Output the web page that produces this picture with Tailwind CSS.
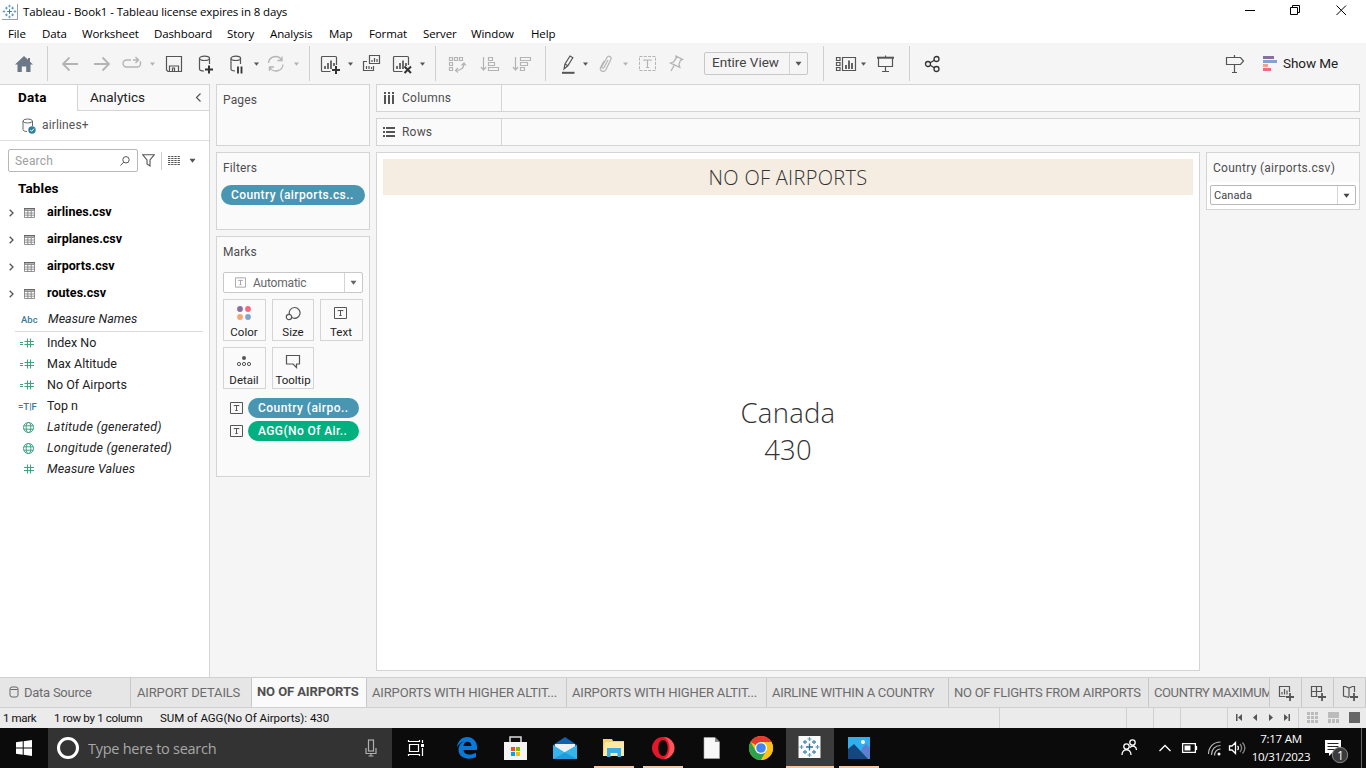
<!DOCTYPE html>
<html lang="en">
<head>
<meta charset="utf-8">
<title>Tableau - Book1</title>
<script src="https://cdn.jsdelivr.net/npm/@tailwindcss/browser@4"></script>
</head>
<body class="w-[1366px] h-[768px] overflow-hidden bg-[#f5f5f5] flex flex-col font-['Roboto',sans-serif] text-[12px] leading-none text-[#4e4e4e] whitespace-nowrap">
<svg class="hidden">
  <symbol id="caret" viewBox="0 0 5 4"><path d="M0 .5h5L2.500 3.800z" fill="currentColor"/></symbol>
  <symbol id="tableau" viewBox="0 0 22 22"><g fill="none" stroke-width="1.300"><path stroke="#2c6f9c" d="M11 7.500v7M7.500 11h7"/><path stroke="#4f8fb5" d="M6.500 4v4M4.500 6h4M15.500 4v4M13.500 6h4M6.500 14v4M4.500 16h4M15.500 14v4M13.500 16h4"/><path stroke="#5a98bd" stroke-width="1.200" d="M11 1v4M9 3h4M11 17v4M9 19h4M1 11h4M3 9v4M17 11h4M19 9v4"/></g></symbol>
  <symbol id="tbl" viewBox="0 0 11 10"><path d="M.5.5h10v9H.5zM.5 2.500h10M.5 5h10M.5 7.200h10M3.800 2.500v7M7.200 2.500v7" fill="none" stroke="#777" stroke-width=".8"/><path d="M0 0h11v1.500H0z" fill="#666"/></symbol>
  <symbol id="hash" viewBox="0 0 10 10"><path d="M3.500.5v9M6.500.5v9M0 3.500h10M0 6.500h10" fill="none" stroke="#3aa57e" stroke-width="1.100"/></symbol>
  <symbol id="eqhash" viewBox="0 0 14 10"><path d="M7.500.5v9M10.500.5v9M4.500 3.500H14M4.500 6.500H14M0 4.500h3M0 6.500h3" fill="none" stroke="#3aa57e" stroke-width="1.100"/></symbol>
  <symbol id="globe" viewBox="0 0 11 11"><g fill="none" stroke="#3aa57e"><circle cx="5.500" cy="5.500" r="5"/><ellipse cx="5.500" cy="5.500" rx="2.300" ry="5"/><path d="M.7 3.800h9.600M.7 7.200h9.600"/></g></symbol>
  <symbol id="tbox" viewBox="0 0 13 12"><path d="M.5.5h12v11H.5z" fill="none" stroke="currentColor"/><path d="M4 4.200V3.500h5v.7M6.500 3.500v5.200M5.300 8.500h2.400" fill="none" stroke="currentColor"/></symbol>
  <symbol id="chev" viewBox="0 0 5 8"><path d="M.7.800L4 4 .7 7.200" fill="none" stroke="#555" stroke-width="1.300"/></symbol>
  <symbol id="chart" viewBox="0 0 22 20"><path d="M10.500 17.500H2.500a1 1 0 0 1-1-1v-13a1 1 0 0 1 1-1h13a1 1 0 0 1 1 1V11" fill="none" stroke="#555" stroke-width="1.200"/><path d="M5 12v3M8 9v6M11 6.500V15M14 9v3" stroke="#555" stroke-width="1.700"/></symbol>
</svg>

<header class="h-[43px] bg-white text-black font-['Open_Sans',sans-serif] text-[11.5px] shrink-0">
  <div class="h-[23px] flex items-center">
    <svg class="ml-[2px] w-4 h-4 border-r border-b border-gray-400" viewBox="0 0 22 22"><use href="#tableau"/></svg>
    <span class="ml-[5px] w-[1217px] tracking-[-0.12px]">Tableau - Book1 - Tableau license expires in 8 days</span>
    <svg class="ml-[5px] w-[110px] h-3 -mt-[3px]" viewBox="0 0 110 12" fill="none" stroke="#000"><path d="M0 6.500h10M45.500 3.500h7v7h-7zM47.500 3.500v-2h7v7h-2M91.500 1.500l9.500 9.500M101 1.500L91.500 11"/></svg>
  </div>
  <nav class="h-5 flex items-center pl-2 pt-[2px] tracking-[-0.12px]">
    <span class="w-[34px]">File</span><span class="w-10">Data</span><span class="w-[72px]">Worksheet</span><span class="w-[73px]">Dashboard</span><span class="w-[43px]">Story</span><span class="w-[59px]">Analysis</span><span class="w-10">Map</span><span class="w-[54px]">Format</span><span class="w-12">Server</span><span class="w-[60px]">Window</span><span>Help</span>
  </nav>
</header>

<div class="h-[41px] shrink-0 flex items-center text-[#555] [&>*]:shrink-0">
  <svg class="ml-[14px] w-5 h-5" viewBox="0 0 20 20"><path d="M10 2L1 10.500h2.500V18h4.300v-5.500h4.400V18h4.300v-7.500H19l-3-2.800V4h-2v1.800z" fill="#6b7888"/></svg>
  <i class="ml-[13px] w-px h-[35px] bg-[#cfcfcf]"></i>
  <svg class="ml-[13px] w-[18px] h-5" viewBox="0 0 18 20" fill="none" stroke="#b4b4b4" stroke-width="1.800"><path d="M17 10H2M8.500 3.500L2 10l6.500 6.500"/></svg>
  <svg class="ml-[14px] w-[18px] h-5" viewBox="0 0 18 20" fill="none" stroke="#b4b4b4" stroke-width="1.800"><path d="M1 10h15M9.500 3.500L16 10l-6.500 6.500"/></svg>
  <svg class="ml-[11px] w-[22px] h-5" viewBox="0 0 22 20" fill="none" stroke="#b4b4b4" stroke-width="1.400"><path d="M9 6H4.500a3.500 3.500 0 0 0 0 7h11a3.500 3.500 0 0 0 2.500-5.500M11 6h5M13.500 3l3 3-3 3"/></svg>
  <svg class="ml-1.5 w-[5px] h-1 text-[#b4b4b4]"><use href="#caret"/></svg>
  <svg class="ml-2.5 w-[18px] h-5" viewBox="0 0 18 20" fill="none" stroke="#555" stroke-width="1.200"><path d="M1.500 2.500h15v15H3l-1.500-1.500zM4.500 17v-5h9v5M7.500 17v-3h2v3"/></svg>
  <svg class="ml-[14px] w-[18px] h-5" viewBox="0 0 18 20" fill="none" stroke="#555" stroke-width="1.200"><path d="M7 17c-3 0-4.500-.8-4.500-2V4.500M12.500 4.500V10"/><ellipse cx="7.500" cy="4.300" rx="5" ry="2.200"/><path d="M8 15.500h8M12 11.500v8" stroke="#333" stroke-width="2"/></svg>
  <svg class="ml-[14px] w-[18px] h-5" viewBox="0 0 18 20" fill="none" stroke="#555" stroke-width="1.200"><path d="M6 17c-2.500-.2-4-.8-4-2V4.500M11.500 4.500V10"/><ellipse cx="6.800" cy="4.300" rx="4.800" ry="2.200"/><path d="M9 12.500v7M12.500 12.500v7" stroke="#333" stroke-width="1.800"/></svg>
  <svg class="ml-[7px] w-[5px] h-1"><use href="#caret"/></svg>
  <svg class="ml-[7px] w-5 h-5" viewBox="0 0 20 20" fill="none" stroke="#b4b4b4" stroke-width="1.300"><path d="M2.500 9A7 7 0 0 1 15.500 6M17 10.500A7 7 0 0 1 4 13.500M16 2.500V6.500h-4.500M3.500 17v-4H8"/></svg>
  <svg class="ml-2 w-[5px] h-1 text-[#b4b4b4]"><use href="#caret"/></svg>
  <i class="ml-2.5 w-px h-[35px] bg-[#cfcfcf]"></i>
  <svg class="ml-2.5 w-[22px] h-5" viewBox="0 0 22 20"><use href="#chart"/><path d="M12 16h8M16 12v8" stroke="#333" stroke-width="2"/></svg>
  <svg class="ml-1.5 w-[5px] h-1"><use href="#caret"/></svg>
  <svg class="ml-[9px] w-5 h-5" viewBox="0 0 20 20" fill="none" stroke="#555" stroke-width="1.200"><path d="M7.500 1.500h10v8h-10zM5 7.500H1.500v9h10V12M10 8V6M12.500 8V4M15 8V5M4.500 15v-3M7 15v-3M9.500 15v-2"/></svg>
  <svg class="ml-2.5 w-[22px] h-5" viewBox="0 0 22 20"><use href="#chart"/><path d="M12.500 12.500l6.500 6.500M19 12.500l-6.500 6.500" stroke="#333" stroke-width="2"/></svg>
  <svg class="ml-1.5 w-[5px] h-1"><use href="#caret"/></svg>
  <i class="ml-2.5 w-px h-[35px] bg-[#cfcfcf]"></i>
  <svg class="ml-3 w-5 h-5" viewBox="0 0 20 20" fill="none" stroke="#b4b4b4" stroke-width="1.200"><path d="M1.500 3.500h3v3h-3zM6.500 3.500h3v3h-3zM11.500 3.500h3v3h-3zM1.500 8.500h3v3h-3zM1.500 13.500h3v3h-3zM8 16.500c5 0 8-2.500 8-7.500M10 14l-2.500 2.500 2.500 2M13.500 11.500L16 9l2 2.500"/></svg>
  <svg class="ml-3 w-5 h-5" viewBox="0 0 20 20" fill="none" stroke="#b4b4b4" stroke-width="1.200"><path d="M3.500 3v13M1 13l2.500 3 2.500-3M8.500 3.500h4v3h-4zM8.500 8.500h6v3h-6zM8.500 13.500h10v3h-10z"/></svg>
  <svg class="ml-3 w-5 h-5" viewBox="0 0 20 20" fill="none" stroke="#b4b4b4" stroke-width="1.200"><path d="M3.500 3v13M1 13l2.500 3 2.500-3M8.500 3.500h10v3h-10zM8.500 8.500h7v3h-7zM8.500 13.500h4v3h-4z"/></svg>
  <i class="ml-[13px] w-px h-[35px] bg-[#cfcfcf]"></i>
  <svg class="ml-[15px] w-4 h-5" viewBox="0 0 16 20" fill="none" stroke="#555" stroke-width="1.200"><path d="M3 15l1-5 5-8 2.800 1.800-5 8zM4 10l2.800 1.800"/><path d="M1 18.800h12.500" stroke-width="2"/></svg>
  <svg class="ml-1.5 w-[5px] h-1"><use href="#caret"/></svg>
  <svg class="ml-2.5 w-4 h-5" viewBox="0 0 16 20" fill="none" stroke="#b4b4b4" stroke-width="1.200"><path d="M10 6l-4 7.500c-.8 1.500-3 .5-2-1.300l5-8.700c1.500-2.500 5-1 3.800 2L8 15.500c-2 3.500-7 1.500-5.500-2L6 7"/></svg>
  <svg class="ml-[9px] w-[5px] h-1 text-[#b4b4b4]"><use href="#caret"/></svg>
  <svg class="ml-2.5 w-5 h-5" viewBox="0 0 20 20" fill="none" stroke="#b4b4b4"><path d="M1.500 2.500h16v14h-16z" stroke-dasharray="3 1.300"/><path d="M6 7V6h7v1M9.500 6v7.500M8 13.500h3" stroke-width="1.200"/></svg>
  <svg class="ml-[9px] w-[18px] h-5" viewBox="0 0 18 20" fill="none" stroke="#b4b4b4" stroke-width="1.300"><path d="M9 2l6.500 3.500-2 .8-1.500 4 .8 3L3.500 9l3-1L9 4.500zM7 11.500L4 17"/></svg>
  <div class="ml-[19px] w-[104px] h-[23px] border border-[#c8c8c8] rounded-xs flex items-center text-[13.5px] text-[#444] -mt-px"><span class="pl-[7px] w-[84px]">Entire View</span><i class="w-px h-full bg-[#d4d4d4]"></i><svg class="ml-[5px] w-[7px] h-[5px] text-[#555]" viewBox="0 0 5 4"><use href="#caret"/></svg></div>
  <i class="ml-[15px] w-px h-[35px] bg-[#cfcfcf]"></i>
  <svg class="ml-[11px] w-[22px] h-5" viewBox="0 0 22 20" fill="none" stroke="#555" stroke-width="1.200"><path d="M1.500 3.500h3.500v3H1.500zM1.500 8.500h3.500v3H1.500zM1.500 13.500h3.500v3H1.500zM7.500 3.500h13v13h-13z"/><path d="M11 15v-4M14 15V6.500M17 15V9" stroke-width="1.800"/></svg>
  <svg class="ml-1 w-[5px] h-1"><use href="#caret"/></svg>
  <svg class="ml-2.5 w-5 h-5" viewBox="0 0 20 20" fill="none" stroke="#555" stroke-width="1.200"><path d="M2.500 4v8.500h14V4M9.500 12.500v5M6 17.500h7M9.500 1.500V3"/><path d="M1 3.700h17" stroke-width="2"/></svg>
  <i class="ml-[13px] w-px h-[35px] bg-[#cfcfcf]"></i>
  <svg class="ml-[14px] w-[18px] h-5" viewBox="0 0 18 20" fill="none" stroke="#333" stroke-width="1.300"><circle cx="4" cy="10" r="2.500"/><circle cx="12.500" cy="5" r="2.500"/><circle cx="12.500" cy="15" r="2.500"/><path d="M6.200 8.700l4.200-2.400M6.200 11.300l4.200 2.400"/></svg>
  <svg class="ml-[283px] w-5 h-5" viewBox="0 0 20 20" fill="none" stroke="#555" stroke-width="1.200"><path d="M1.500 3.500h14l3 3.500-3 3.500h-14zM9.500 1v2.500M9.500 10.500v8M7 18.500h5"/></svg>
  <svg class="ml-[18px] w-[15px] h-5" viewBox="0 0 15 20"><path d="M0 2h11v3H0z" fill="#8a6f9e"/><path d="M0 6h14v3H0z" fill="#7fa5cf"/><path d="M0 10h5v3H0z" fill="#f2a584"/><path d="M0 14h8v3H0z" fill="#f9677e"/></svg>
  <span class="ml-[5px] text-[13.5px] text-[#222] tracking-[-0.08px]">Show Me</span>
</div>

<div class="h-[593px] shrink-0 flex">
  <aside class="w-[210px] h-full bg-white border-r border-t border-[#d4d4d4] text-black">
    <div class="flex h-[26px] items-center text-[13.5px] text-[#222]">
      <b class="pl-[18px] w-[77px] text-black tracking-[0.2px]">Data</b>
      <div class="flex-1 h-full border-l border-b border-[#d4d4d4] bg-[#fafafa] flex items-center pl-3"><span class="w-[104px]">Analytics</span><svg class="ml-[1px] w-[7px] h-[9px]" viewBox="0 0 7 9"><path d="M5.500.500L1.500 4.500l4 4" fill="none" stroke="#555" stroke-width="1.200"/></svg></div>
    </div>
    <div class="h-[30px] border-b border-[#e0e0e0] flex items-center pl-[22px] text-[#555]">
      <svg class="w-[15px] h-4" viewBox="0 0 15 16" fill="none" stroke="#666"><path d="M5 13.500c-2.500 0-4-.8-4-2V3M10.500 3v5"/><ellipse cx="5.700" cy="3" rx="4.700" ry="2"/><circle cx="10" cy="12" r="3.700" fill="#2f7f9f" stroke="none"/><path d="M8.300 12l1.300 1.300 2.300-2.600" stroke="#fff"/></svg>
      <span class="ml-[5px] -mt-px tracking-[0.15px]">airlines+</span>
    </div>
    <div class="mt-2 ml-2 flex h-[23px] items-center">
      <div class="w-[130px] h-full border border-[#b8b8b8] rounded-xs flex items-center pl-1.5 text-[#a0a0a0]"><span class="w-[105px] tracking-[0.2px]">Search</span><svg class="w-[10px] h-[10px]" viewBox="0 0 10 10" fill="none" stroke="#555"><circle cx="6" cy="3.800" r="3.200"/><path d="M3.600 6.200L.5 9.500"/></svg></div>
      <svg class="ml-1 w-[13px] h-[13px]" viewBox="0 0 13 13" fill="none" stroke="#555" stroke-width="1.100"><path d="M.8.800h11.400L8 6v6L5 10V6z"/></svg>
      <i class="ml-[6px] w-px h-[18px] bg-[#ccc]"></i>
      <svg class="ml-[6px] w-3 h-[10px]" viewBox="0 0 12 10" stroke="#555" stroke-width="1"><path stroke-dasharray="2.300 .9" d="M0 .5h12M0 2.500h12M0 4.500h12M0 6.500h12M0 8.500h12"/></svg>
      <svg class="ml-[9px] w-[7px] h-[5px] text-[#555]" viewBox="0 0 5 4"><use href="#caret"/></svg>
    </div>
    <div class="h-[27px] flex items-center pl-[18px] text-[13.5px] font-bold pt-[6px] tracking-[0.1px]">Tables</div>
    <div class="font-bold text-[12.5px] tracking-[0.04px]">
      <div class="h-[27px] flex items-center pl-[9px]"><svg class="w-[5px] h-2"><use href="#chev"/></svg><svg class="ml-[10px] mr-[12px] w-[11px] h-[10px]"><use href="#tbl"/></svg>airlines.csv</div>
      <div class="h-[27px] flex items-center pl-[9px]"><svg class="w-[5px] h-2"><use href="#chev"/></svg><svg class="ml-[10px] mr-[12px] w-[11px] h-[10px]"><use href="#tbl"/></svg>airplanes.csv</div>
      <div class="h-[27px] flex items-center pl-[9px]"><svg class="w-[5px] h-2"><use href="#chev"/></svg><svg class="ml-[10px] mr-[12px] w-[11px] h-[10px]"><use href="#tbl"/></svg>airports.csv</div>
      <div class="h-[27px] flex items-center pl-[9px]"><svg class="w-[5px] h-2"><use href="#chev"/></svg><svg class="ml-[10px] mr-[12px] w-[11px] h-[10px]"><use href="#tbl"/></svg>routes.csv</div>
    </div>
    <div class="text-[12.5px] text-[#222]">
      <div class="h-[25px] ml-[15px] mr-[6px] border-b border-[#dadada] flex items-center pt-px"><span class="pl-[6px] w-[33px] text-[9.5px] font-medium text-[#3b7a9b]">Abc</span><i class="tracking-[0.05px]">Measure Names</i></div>
      <div class="h-[21px] mt-px flex items-center pl-5"><svg class="w-[14px] h-[10px] mr-[13px] -mt-px"><use href="#eqhash"/></svg>Index No</div>
      <div class="h-[21px] flex items-center pl-5"><svg class="w-[14px] h-[10px] mr-[13px] -mt-px"><use href="#eqhash"/></svg>Max Altitude</div>
      <div class="h-[21px] flex items-center pl-5"><svg class="w-[14px] h-[10px] mr-[13px] -mt-px"><use href="#eqhash"/></svg>No Of Airports</div>
      <div class="h-[21px] flex items-center pl-[18px]"><span class="w-[29px] text-[9.5px] text-[#3b7a9b] font-medium">=T|F</span>Top n</div>
      <div class="h-[21px] flex items-center pl-[23px]"><svg class="w-[11px] h-[11px] mr-[13px]"><use href="#globe"/></svg><i class="tracking-[0.27px]">Latitude (generated)</i></div>
      <div class="h-[21px] flex items-center pl-[23px]"><svg class="w-[11px] h-[11px] mr-[13px]"><use href="#globe"/></svg><i class="tracking-[0.27px]">Longitude (generated)</i></div>
      <div class="h-[21px] flex items-center pl-6"><svg class="w-[10px] h-[10px] mr-[13px] -mt-px"><use href="#hash"/></svg><i class="tracking-[0.12px]">Measure Values</i></div>
    </div>
  </aside>

  <section class="ml-1.5 w-[154px] flex flex-col gap-1.5 [&>div]:border [&>div]:border-[#d4d4d4] [&>div]:bg-[#fafafa]">
    <div class="h-[62px] pl-1.5 pt-[9px] tracking-[0.15px]">Pages</div>
    <div class="h-[78px] pl-1.5 pt-[9px]"><div class="tracking-[0.15px]">Filters</div>
      <div class="-ml-0.5 mt-[11px] w-[144px] h-5 rounded-full bg-[#4996b2] text-white pl-2.5 flex items-center font-medium tracking-[0.4px]">Country (airports.cs..</div>
    </div>
    <div class="h-[241px] pl-1.5 pt-[9px]"><div class="tracking-[0.1px]">Marks</div>
      <div class="mt-[14px] w-[140px] h-[21px] border border-[#c8c8c8] rounded-xs bg-white flex items-center text-[#666]"><svg class="ml-[11px] w-[11px] h-[11px] text-[#999]"><use href="#tbox"/></svg><span class="ml-[7px] w-[91px] tracking-[-0.2px]">Automatic</span><i class="w-px h-full bg-[#d4d4d4]"></i><svg class="ml-[5px] w-[7px] h-[5px]" viewBox="0 0 5 4"><use href="#caret"/></svg></div>
      <div class="mt-1.5 w-[140px] grid grid-cols-[43px_42px_43px] gap-x-1.5 gap-y-1.5 text-center text-[11.5px] text-[#222] [&>div]:h-[42px] [&>div]:border [&>div]:border-[#d4d4d4] [&>div]:flex [&>div]:flex-col [&>div]:items-center [&>div]:justify-between [&>div]:pt-[5px] [&>div]:pb-[2px]">
        <div><svg class="w-4 h-4 mr-px" viewBox="0 0 16 16"><circle cx="4" cy="4" r="2.900" fill="#8a6f9e"/><circle cx="12" cy="4" r="2.900" fill="#f9677e"/><circle cx="4" cy="12" r="2.900" fill="#f2a57a"/><circle cx="12" cy="12" r="2.900" fill="#7fa5cf"/></svg><span class="mr-px">Color</span></div>
        <div><svg class="w-4 h-4" viewBox="0 0 16 16" fill="none" stroke="#555" stroke-width="1.200"><path d="M4.500 9.500A5.400 5.400 0 1 1 7 12.600"/><circle cx="4" cy="12" r="2.700"/></svg><span>Size</span></div>
        <div><svg class="w-[13px] h-3 mt-0.5 mr-0.5 text-[#555]"><use href="#tbox"/></svg><span class="mr-px">Text</span></div>
        <div><svg class="w-4 h-4 mr-px" viewBox="0 0 16 16" fill="none" stroke="#555"><circle cx="8" cy="5" r="2" fill="#555" stroke="none"/><circle cx="3" cy="11" r="1.600"/><circle cx="8" cy="11" r="1.600"/><circle cx="13" cy="11" r="1.600"/></svg><span class="mr-px">Detail</span></div>
        <div><svg class="w-4 h-4" viewBox="0 0 16 16" fill="none" stroke="#555" stroke-width="1.200"><path d="M1.500 2.500h13v8.500h-3v3.500L8 11H1.500z"/></svg><span>Tooltip</span></div>
      </div>
      <div class="mt-[9px] ml-[7px] flex items-center h-5 text-white font-medium"><svg class="w-[13px] h-3 text-[#555]"><use href="#tbox"/></svg><div class="ml-[5px] w-[111px] h-5 rounded-full bg-[#4996b2] pl-2.5 flex items-center tracking-[0.45px]">Country (airpo..</div></div>
      <div class="mt-[3px] ml-[7px] flex items-center h-5 text-white font-medium"><svg class="w-[13px] h-3 text-[#555]"><use href="#tbox"/></svg><div class="ml-[5px] w-[111px] h-5 rounded-full bg-[#00b180] pl-2.5 flex items-center tracking-[0.4px]">AGG(No Of Air..</div></div>
    </div>
  </section>

  <main class="ml-1.5 w-[984px] flex flex-col gap-1.5">
    <div class="h-7 border border-[#d4d4d4] bg-[#fafafa] flex items-center"><svg class="ml-[6px] w-3 h-3" viewBox="0 0 12 12" stroke="#555" stroke-width="2"><path d="M2 0v2M6 0v2M10 0v2M2 3v9M6 3v9M10 3v9"/></svg><span class="ml-[7px] w-[99px] tracking-[0.25px]">Columns</span><i class="w-px h-full bg-[#d4d4d4]"></i></div>
    <div class="h-7 border border-[#d4d4d4] bg-[#fafafa] flex items-center"><svg class="ml-[6px] w-3 h-3" viewBox="0 0 12 12" stroke="#555" stroke-width="2"><path d="M0 2h2M0 6h2M0 10h2M3 2h9M3 6h9M3 10h9"/></svg><span class="ml-[7px] w-[99px] tracking-[0.2px]">Rows</span><i class="w-px h-full bg-[#d4d4d4]"></i></div>
    <div class="flex gap-1.5">
      <div class="w-[824px] h-[519px] border border-[#d4d4d4] bg-white p-1.5 font-['Open_Sans',sans-serif] font-light text-[#333]">
        <h1 class="h-9 bg-[#f5ede2] flex items-center justify-center text-[20px] pt-[2px] tracking-[0.3px]">NO OF AIRPORTS</h1>
        <div class="flex flex-col items-center text-[27.5px] leading-[37px] pt-[199px]"><span class="tracking-[0.25px]">Canada</span><span class="tracking-[0.2px]">430</span></div>
      </div>
      <div class="w-[154px] h-[58px] border border-[#d4d4d4] bg-white">
        <div class="h-[29px] bg-[#fafafa] flex items-center pl-1.5 tracking-[0.28px]">Country (airports.csv)</div>
        <div class="ml-[3px] mt-[3px] w-[146px] h-5 border border-[#b8b8b8] rounded-xs flex items-center pl-[3px] text-[11px] text-[#444]"><span class="w-[123px] tracking-[0.1px]">Canada</span><i class="w-px h-full bg-[#d4d4d4]"></i><svg class="ml-[5px] w-[7px] h-[5px]" viewBox="0 0 5 4"><use href="#caret"/></svg></div>
      </div>
    </div>
  </main>
</div>

<div class="h-[31px] shrink-0 border-y border-[#d0d0d0] bg-[#e6e6e6] flex text-[13px] text-[#6c6c6c] tracking-[-0.15px] [&>div]:border-r [&>div]:border-[#c8c8c8] [&>div]:flex [&>div]:items-center [&>div]:shrink-0">
  <div class="w-[131px] pl-[9px]"><svg class="w-[10px] h-3 -mt-0.5" viewBox="0 0 10 12" fill="none" stroke="#666"><rect x="1" y="1" width="8" height="10" rx="2"/><path d="M1.500 3.500h7"/></svg><span class="ml-[5px] tracking-[-0.25px]">Data Source</span></div>
  <div class="w-[121px] pl-1.5">AIRPORT DETAILS</div>
  <div class="w-[115px] pl-[5px] bg-[#fafafa] font-bold text-[#505050] pb-0.5 tracking-[-0.08px]">NO OF AIRPORTS</div>
  <div class="w-[200px] pl-[5px]">AIRPORTS WITH HIGHER ALTIT...</div>
  <div class="w-[200px] pl-[5px]">AIRPORTS WITH HIGHER ALTIT...</div>
  <div class="w-[182px] pl-[5px] tracking-[-0.25px]">AIRLINE WITHIN A COUNTRY</div>
  <div class="w-[200px] pl-[5px] tracking-[-0.26px]">NO OF FLIGHTS FROM AIRPORTS</div>
  <div class="w-[121px] pl-[5px] overflow-hidden tracking-[-0.4px]">COUNTRY MAXIMUM</div>
  <div class="w-8 justify-center"><svg class="w-4 h-4" viewBox="0 0 16 16" fill="none" stroke="#555" stroke-width="1.200"><path d="M7.500 11.500H1.500v-10h10V7M4 9.500V7M6.500 9.500V4M9 9.500V5.500"/><path d="M8 12h8M12 8v8" stroke-width="1.800"/></svg></div>
  <div class="w-8 justify-center"><svg class="w-4 h-4" viewBox="0 0 16 16" fill="none" stroke="#555" stroke-width="1.200"><path d="M7.500 11.500H1.500v-10h10V7M1.500 6.500h10M6.500 1.500v10"/><path d="M8 12h8M12 8v8" stroke-width="1.800"/></svg></div>
  <div class="w-8 justify-center"><svg class="w-4 h-4" viewBox="0 0 16 16" fill="none" stroke="#555" stroke-width="1.200"><path d="M7 12.500L1.500 11V1.500h2L7 3l3.500-1.500h2V7M7 3v9"/><path d="M8 12h8M12 8v8" stroke-width="1.800"/></svg></div>
</div>
<div class="h-5 shrink-0 bg-[#ebebeb] flex items-center text-[11.5px] text-[#111] pl-[3px] [&>*]:shrink-0">
  <span class="w-[51px] pt-px tracking-[-0.35px]">1 mark</span><span class="w-[106px] pt-px tracking-[-0.3px]">1 row by 1 column</span><span class="w-[839px] pt-px tracking-[-0.03px]">SUM of AGG(No Of Airports): 430</span>
  <div class="flex h-full [&>i]:border-l [&>i]:border-[#d0d0d0]"><i class="w-[127px]"></i><i class="w-[27px]"></i><i class="w-[27px]"></i><i class="w-[47px]"></i></div>
  <svg class="w-[139px] h-5" viewBox="1227 0 139 20"><path d="M1227.500 0v20M1298.500 0v20" stroke="#d0d0d0"/><g fill="#555"><path d="M1236 6h1.500v7H1236zM1242 6v7l-4-3.500zM1257 6v7l-4-3.500zM1269 6v7l4-3.500zM1284 6v7l4-3.500zM1288.500 6h1.500v7h-1.500z"/></g><path d="M1307 5.500h11M1307 9.500h11M1307 13.500h11" stroke="#bbb" stroke-width="3" stroke-dasharray="3 1"/><path d="M1328 4h11v6h-11zM1328 11h3v4h-3zM1332 11h3v4h-3zM1336 11h3v4h-3z" fill="#bbb"/><path d="M1349 4h11v11h-11z" fill="#666"/></svg>
</div>

<footer class="h-10 shrink-0 bg-[#0b0b0b] flex items-center text-white font-['Open_Sans',sans-serif] [&>*]:shrink-0">
  <svg class="w-12 h-10" viewBox="0 0 48 40" fill="#fff"><path d="M16 14.300l6.700-1v6.200H16zM23.700 13.200l8.300-1.200v7.500h-8.300zM16 20.500h6.700v6.200l-6.700-1zM23.700 20.500H32V28l-8.300-1.200z"/></svg>
  <div class="w-[344px] h-full bg-[#333] flex items-center text-[14.5px] text-[#a8a8a8]">
    <i class="ml-[9px] w-[22px] h-[22px] rounded-full border-[3px] border-white"></i><span class="ml-[9px] w-[277px] pt-[2px] tracking-[-0.27px]">Type here to search</span>
    <svg class="w-3 h-[18px]" viewBox="0 0 12 18" fill="none" stroke="#b0b0b0" stroke-width="1.200"><rect x="3.500" y="1" width="5" height="11"/><path d="M1 9v5.500h10V9M6 14.500V17M3.500 17h5"/></svg>
  </div>
  <svg class="w-[49px] h-10" viewBox="0 0 49 40" fill="none" stroke="#fff" stroke-width="1.200"><path d="M17.500 16.500h9v7h-9zM16.500 12v1.500h11V12M16.500 28v-1.500h11V28M30.500 12v3M30.500 20v8"/><path d="M29 16h3v3h-3z" fill="#fff" stroke="none"/></svg>
  <svg class="w-[49px] h-10" viewBox="0 0 49 40"><path d="M16 19c.8-6 5-10 10-10 6 0 10 4.500 10 10v3H22.500c.2 3 2.700 4.500 6 4.500 2.200 0 4.500-.7 6.500-1.800v4.300c-2 1-4.500 1.700-7.200 1.700-6 0-10.300-3.500-10.300-8.700 0-4 2-7.200 5.500-8.800-2.800.7-5.200 2.700-7 5.800zM22.500 18h8c0-2.700-1.500-4.300-4-4.300s-3.800 1.700-4 4.300z" fill="#0a78d7"/></svg>
  <svg class="ml-px w-[49px] h-10" viewBox="0 0 49 40"><path d="M19 14V9h11v5" fill="none" stroke="#ddd" stroke-width="1.500"/><path d="M13 14h23v18H13z" fill="#f4f4f4"/><path d="M20 19h4v4h-4z" fill="#f25022"/><path d="M25 19h4v4h-4z" fill="#7fba00"/><path d="M20 24h4v4h-4z" fill="#00a4ef"/><path d="M25 24h4v4h-4z" fill="#ffb900"/></svg>
  <svg class="w-[49px] h-10" viewBox="0 0 49 40"><path d="M13 17l12-8 12 8v14H13z" fill="#0f62ae"/><path d="M15 16h20v6l-10 5-10-5z" fill="#f0f0f0"/><path d="M37 17v14H13z" fill="#35b4ee"/><path d="M13 17l12 7.500-3 6.500h-9z" fill="#35b4ee"/><path d="M25 24.500L13 31h24z" fill="#2299e0"/></svg>
  <svg class="w-[49px] h-10" viewBox="0 0 49 40"><path d="M14 11h9l1 2h11v15H14z" fill="#f8d25e"/><path d="M16 14h19v14H14z" fill="#ffe99e"/><path d="M18 29v-9h14v9h-3.500v-4h-7v4z" fill="#36b0e4"/><path d="M5 38h40v2H5z" fill="#f6c6a2"/></svg>
  <svg class="w-[49px] h-10" viewBox="0 0 49 40"><circle cx="25" cy="20" r="11" fill="#e3162c"/><path d="M25.500 9a11 11 0 0 1 0 22c4.500-2 6-7 6-11s-1.500-9-6-11z" fill="#ff5459"/><ellipse cx="25" cy="20" rx="4.700" ry="8" fill="#0b0b0b"/><path d="M5 38h40v2H5z" fill="#f6c6a2"/></svg>
  <svg class="w-[49px] h-10" viewBox="0 0 49 40"><path d="M17 9.500h11l4.500 4.500v16.500H17z" fill="#f7f7f7" stroke="#aaa" stroke-width=".6"/><path d="M28 9.500V14h4.500z" fill="#888"/></svg>
  <svg class="w-[49px] h-10" viewBox="0 0 49 40"><circle cx="25" cy="20" r="12" fill="#fbc116"/><path d="M25 20L14.600 14A12 12 0 0 1 35.400 14z" fill="#e33b2e"/><path d="M14.600 14A12 12 0 0 0 25 32l5.500-9.500H19.500z" fill="#2ba24c"/><path d="M35.400 14H25l5.500 9L25 32a12 12 0 0 0 10.400-18z" fill="#fbc116"/><circle cx="25" cy="20" r="6" fill="#fff"/><circle cx="25" cy="20" r="4.800" fill="#4285f4"/></svg>
  <svg class="w-[49px] h-10" viewBox="0 0 49 40"><path d="M1 0h48v40H1z" fill="#3b3b3b"/><path d="M13.500 8h22v22h-22z" fill="#fafafa"/><use href="#tableau" x="13.500" y="8" width="22" height="22"/><path d="M1 38h48v2H1z" fill="#f6c6a2"/></svg>
  <svg class="w-[49px] h-10" viewBox="0 0 49 40"><path d="M14 9h22v22H14z" fill="#2fb0f0"/><path d="M28 20l4-4 4 4v11H24z" fill="#5f7fd0"/><path d="M14 21l6-5 14 15H14z" fill="#14467f"/><circle cx="29" cy="14" r="2" fill="#fff"/><path d="M5 38h40v2H5z" fill="#f6c6a2"/></svg>
  <svg class="ml-[236px] w-[130px] h-10" viewBox="1119 0 130 40" fill="none" stroke="#fff" stroke-width="1.300"><circle cx="1126.500" cy="18.500" r="2.700"/><circle cx="1132.500" cy="14.500" r="2.700"/><path d="M1122 27c0-7 9-7 9 0M1130 19.500c3-3 6.500-1 6.500 2.500"/><path d="M1159.500 23l5.500-5.500 5.500 5.500"/><path d="M1182.600 15.600h12.800v8.800h-12.800zM1196.500 18v4"/><path d="M1184.500 17.500h6v5h-6z" fill="#fff" stroke="none"/><g stroke-width="1.200"><path d="M1208.500 26c0-7 5-12 12-12M1211.500 27c0-5.500 3.500-9.500 9-9.500M1214.500 27.500c0-3.500 2.500-6.500 6-6.500" stroke="#bbb"/><circle cx="1219" cy="26" r="1.500" fill="#fff" stroke="none"/></g><path d="M1229.500 18h2.500l3.500-3.500v11l-3.500-3.500h-2.500zM1237.500 18c1.200 1 1.200 3 0 4"/><path d="M1240 16c2 2.500 2 5.500 0 8M1242.500 14.500c3 3.500 3 7.500 0 11" stroke="#888"/></svg>
  <div class="ml-[1px] w-[62px] text-center text-[11.5px] leading-[18px] tracking-[-0.25px]"><div>7:17 AM</div><div>10/31/2023</div></div>
  <svg class="ml-2 w-[46px] h-10" viewBox="1320 0 46 40"><path d="M1325 12h16v13h-9l-3 3v-3h-4z" fill="#fff"/><path d="M1327.500 15.500h11M1327.500 18.500h11M1327.500 21.500h8" stroke="#222"/><circle cx="1340" cy="27" r="7.700" fill="#3b3b3b" stroke="#888"/><text x="1337" y="31.500" font-size="12" fill="#fff">1</text><path d="M1361.500 0v40" stroke="#666"/></svg>
</footer>
</body>
</html>
